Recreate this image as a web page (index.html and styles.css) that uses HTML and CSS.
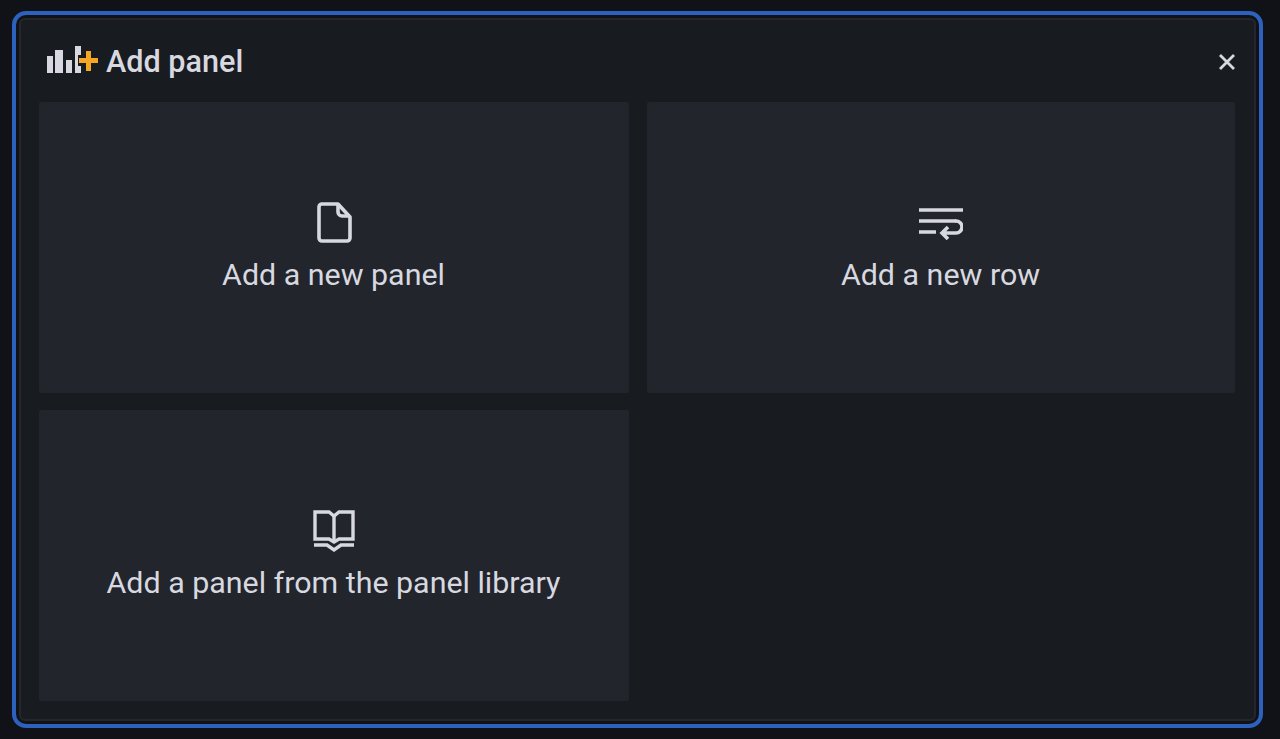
FILE: index.html
```html
<!DOCTYPE html>
<html lang="en">
<head>
    <meta charset="UTF-8">
    <title>Add panel</title>
    <link rel="stylesheet" href="styles.css">
</head>
<body>
    <div class="panel-focus">
        <div class="panel">
            <div class="panel-header">
                <svg class="panel-icon" viewBox="0 0 52 32" width="52" height="32">
                    <rect x="0" y="10" width="6" height="17" fill="#d8d9e0"/>
                    <rect x="8" y="4" width="8" height="23" fill="#d8d9e0"/>
                    <rect x="19" y="14" width="6" height="13" fill="#d8d9e0"/>
                    <path d="M28 27V0h6v9h-3v11h3v7z" fill="#d8d9e0"/>
                    <path d="M39 5h5v7h7v5h-7v8h-5v-8h-7v-5h7z" fill="#f5a623"/>
                </svg>
                <span class="panel-title">Add panel</span>
                <svg class="close-icon" viewBox="0 0 18 18" width="18" height="18">
                    <path d="M2 2l14 14M16 2L2 16" stroke="#d8d9e0" stroke-width="2.800" fill="none"/>
                </svg>
            </div>
            <div class="card-grid">
                <div class="card">
                    <svg class="card-icon" viewBox="0 0 44 44" width="44" height="44">
                        <path d="M10 3h16l12 13v21a3 3 0 0 1-3 3H10a3 3 0 0 1-3-3V6a3 3 0 0 1 3-3z" fill="none" stroke="#d8d9e0" stroke-width="3.600" stroke-linejoin="round"/>
                        <path d="M26 3v8a4 4 0 0 0 4 4h8" fill="none" stroke="#d8d9e0" stroke-width="3.600"/>
                    </svg>
                    <span class="card-label">Add a new panel</span>
                </div>
                <div class="card">
                    <svg class="card-icon" viewBox="0 0 44 44" width="44" height="44">
                        <path d="M0 9h44M0 20h37M0 31h17" fill="none" stroke="#d8d9e0" stroke-width="3.600"/>
                        <path d="M36 20h1a6 6 0 0 1 0 12H24M29 26l-6 6 6 6" fill="none" stroke="#d8d9e0" stroke-width="3.600"/>
                    </svg>
                    <span class="card-label">Add a new row</span>
                </div>
                <div class="card">
                    <svg class="card-icon" viewBox="0 0 44 44" width="44" height="44">
                        <path d="M3 3h14l5 4 5-4h14v27H27l-5 3-5-3H3z" fill="none" stroke="#d8d9e0" stroke-width="3.400"/>
                        <path d="M22 7v25" fill="none" stroke="#d8d9e0" stroke-width="3.400"/>
                        <path d="M2 36h13l7 5 7-5h13" fill="none" stroke="#d8d9e0" stroke-width="3.400"/>
                    </svg>
                    <span class="card-label">Add a panel from the panel library</span>
                </div>
            </div>
        </div>
    </div>
</body>
</html>
```

FILE: styles.css
```css
* {
    margin: 0;
    padding: 0;
    box-sizing: border-box;
}

body {
    width: 1280px;
    height: 739px;
    padding: 11px 17px 11px 12px;
    background: #111217;
    font-family: Roboto, sans-serif;
    color: #d8d9e0;
    overflow: hidden;
}

.panel-focus {
    height: 717px;
    padding: 3px;
    border: 4px solid #2c62be;
    border-radius: 14px;
}

.panel {
    height: 100%;
    padding: 0 19px 0 18px;
    background: #181b1f;
    border: 2px solid #24262c;
    border-radius: 6px;
}

.panel-header {
    display: flex;
    align-items: center;
    height: 82px;
    padding-left: 8px;
}

.panel-icon {
    flex-shrink: 0;
    margin: 2px 7px 0 0;
}

.panel-title {
    font-size: 30.600px;
    font-weight: 500;
}

.close-icon {
    margin: 2px -1px 0 auto;
}

.card-grid {
    display: grid;
    grid-template-columns: 590px 588px;
    grid-template-rows: 291px 291px;
    gap: 17px 18px;
}

.card {
    display: flex;
    flex-direction: column;
    align-items: center;
    justify-content: center;
    gap: 14px;
    padding: 0 1px 3px 0;
    background: #22252b;
    border-radius: 2px;
}

.card-label {
    font-size: 30.400px;
    line-height: 32px;
}
```
